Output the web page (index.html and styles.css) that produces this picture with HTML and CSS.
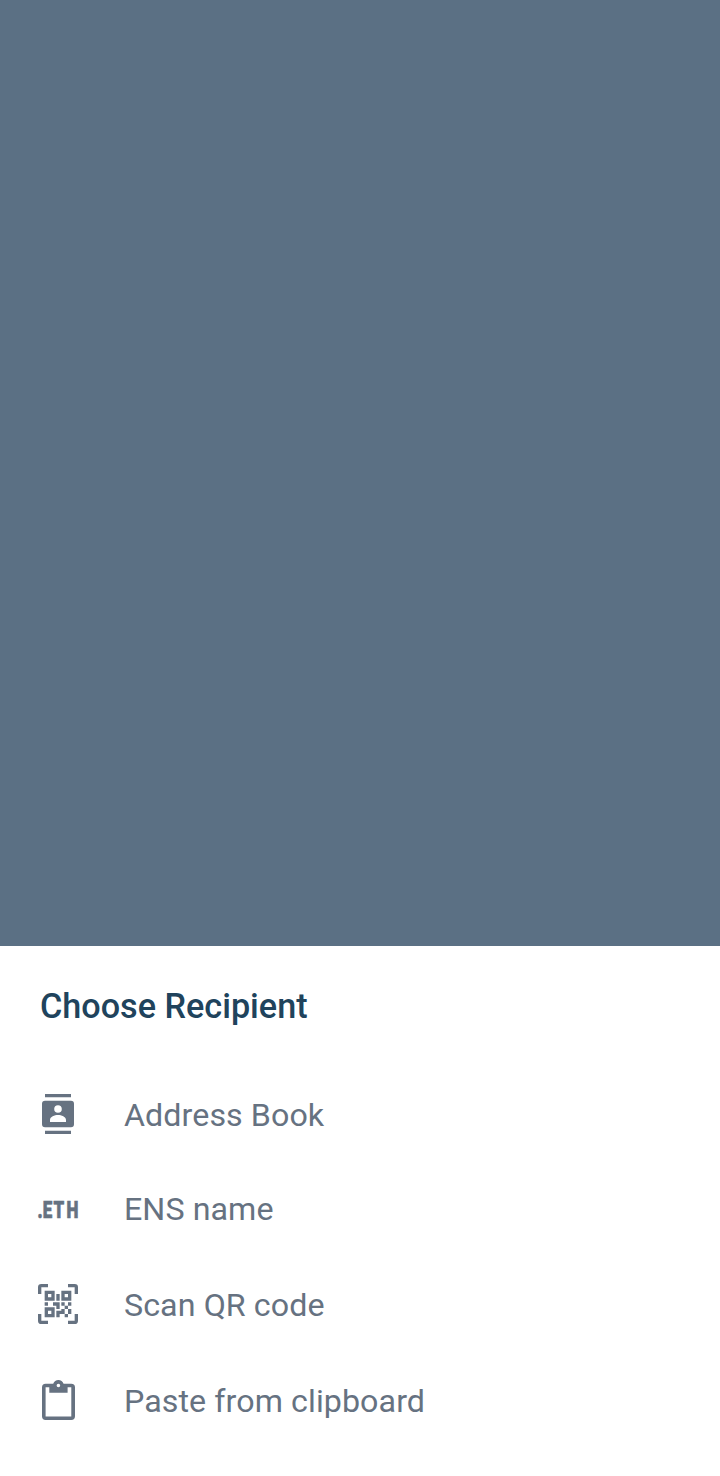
FILE: index.html
```html
<!DOCTYPE html>
<html lang="en">
<head>
<meta charset="utf-8">
<title>Choose Recipient</title>
<link rel="stylesheet" href="styles.css">
</head>
<body>
<div class="screen">
  <div class="backdrop"></div>
  <section class="sheet">
    <h1 class="title">Choose Recipient</h1>
    <ul class="options">
      <li class="option">
        <svg class="icon" viewBox="0 0 40 40"><path fill-rule="evenodd" d="M7 0H33V3.3H7ZM7 36.7H33V40H7ZM7 6.7H33Q36 6.7 36 9.7V30.3Q36 33.3 33 33.3H7Q4 33.3 4 30.3V9.7Q4 6.7 7 6.7ZM20 11.2A3.8 3.8 0 1 0 20 18.8A3.8 3.8 0 1 0 20 11.2ZM12 28H28V26C28 22.7 23.4 21 20 21S12 22.7 12 26Z"/></svg>
        <span class="label">Address Book</span>
      </li>
      <li class="option">
        <svg class="icon" viewBox="0 0 40 40"><text class="eth" transform="translate(-0.6 29.9) scale(0.7 1)" x="0 7.8 23.1 41.7">.ETH</text></svg>
        <span class="label">ENS name</span>
      </li>
      <li class="option">
        <svg class="icon" viewBox="0 0 24 24"><path d="M4,4H10V10H4V4M20,4V10H14V4H20M14,15H16V13H14V11H16V13H18V11H20V13H18V15H20V18H18V20H16V18H13V20H11V16H14V15M16,15V18H18V15H16M4,20V14H10V20H4M6,6V8H8V6H6M16,6V8H18V6H16M6,16V18H8V16H6M4,11H6V13H4V11M9,11H13V15H11V13H9V11M11,6H13V10H11V6M2,2V6H0V2A2,2 0 0,1 2,0H6V2H2M22,0A2,2 0 0,1 24,2V6H22V2H18V0H22M2,18V22H6V24H2A2,2 0 0,1 0,22V18H2M22,22V18H24V22A2,2 0 0,1 22,24H18V22H22Z"/></svg>
        <span class="label">Scan QR code</span>
      </li>
      <li class="option">
        <svg class="icon" viewBox="0 0 40 40"><path fill-rule="evenodd" d="M7.6 3.7H15.2C16 1.4 18 0 20.4 0S24.8 1.4 25.6 3.7H33.2Q37 3.7 37 7.4V36.3Q37 40 33.2 40H7.6Q4 40 4 36.3V7.4Q4 3.7 7.6 3.7ZM7.6 7.3V36.4H33.3V7.3H29.6V12.7H11.3V7.3ZM20.4 3.7A1.8 1.8 0 1 0 20.4 7.3A1.8 1.8 0 1 0 20.4 3.7Z"/></svg>
        <span class="label">Paste from clipboard</span>
      </li>
    </ul>
  </section>
</div>
</body>
</html>
```
FILE: styles.css
```css
body {
  margin: 0;
  font-family: Roboto, "Noto Sans", sans-serif;
}
.screen {
  display: flex;
  flex-direction: column;
  height: 1476px;
}
.backdrop {
  flex: 1;
  background: #5b7084;
}
.sheet {
  box-sizing: border-box;
  height: 530px;
  padding: 40px 38px 0;
  background: #fff;
}
.title {
  margin: 0 0 42px 2px;
  color: #20435c;
  font-size: 34.2px;
  font-weight: 500;
  line-height: 40px;
}
.options {
  margin: 0;
  padding: 0;
  list-style: none;
}
.option {
  display: flex;
  align-items: center;
  gap: 46px;
  height: 96px;
  color: #667281;
}
.option:first-child {
  height: 92px;
}
.icon {
  flex: none;
  width: 40px;
  height: 40px;
  overflow: visible;
  fill: #667281;
}
.eth {
  font-size: 24.2px;
  font-weight: 900;
  stroke: #667281;
  stroke-width: 0.7px;
}
.label {
  padding-top: 2px;
  font-size: 32.2px;
  line-height: 40px;
  letter-spacing: 0.08px;
}
```
